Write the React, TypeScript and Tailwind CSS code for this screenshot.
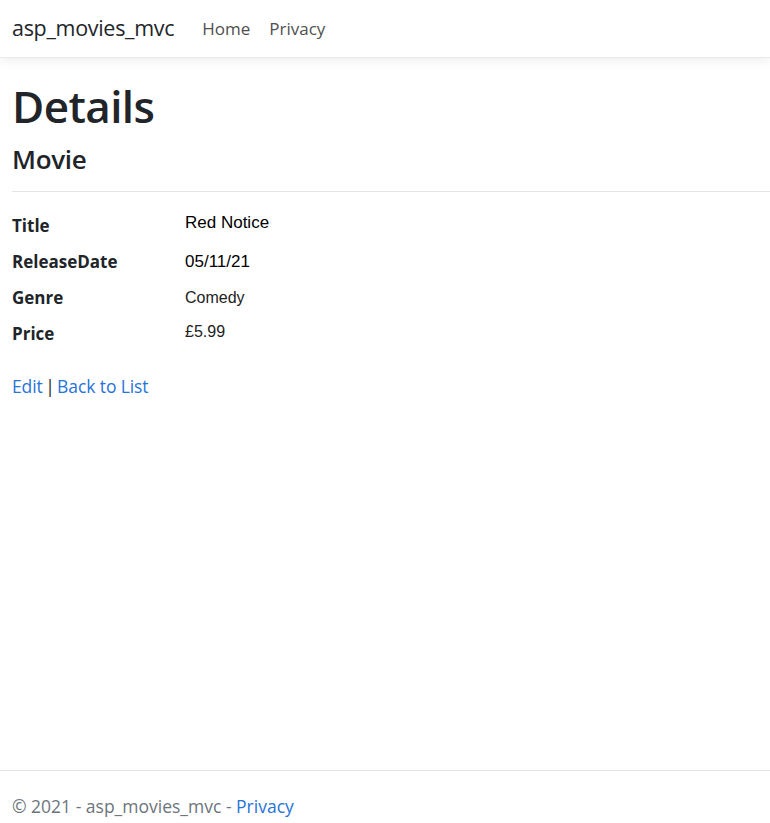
import React from "react";

export default function App() {
  return (
    <div className="min-h-[823px] flex flex-col bg-white text-[#212529] font-['Open_Sans',sans-serif]">
      <header className="h-[58px] flex items-center pl-3 border-b border-[#e9e9e9] shadow-[0_4px_10px_rgba(0,0,0,0.06)]">
        <span className="text-[21.5px] tracking-[-0.3px] text-[#212529]">asp_movies_mvc</span>
        <nav className="flex ml-[28px] gap-[19px] text-[17px] text-[#505050]">
          <span>Home</span>
          <span>Privacy</span>
        </nav>
      </header>
      <main className="flex-1 pl-3 pt-[20px]">
        <h1 className="text-[44px] font-semibold leading-[56px] tracking-[-0.6px]">Details</h1>
        <h4 className="text-[26px] font-semibold leading-[30px] mt-[10px] tracking-[-0.3px]">Movie</h4>
        <hr className="mt-[17px] border-[#e5e5e5]" />
        <dl className="grid grid-cols-[173px_1fr] mt-[16px] gap-y-0">
          <dt className="font-bold text-[17px] h-[36px] leading-[36px]">Title</dt>
          <dd className="text-[17px] h-[36px] leading-[36px] -mt-[3px] font-['Liberation_Sans',Arial,sans-serif] text-black">Red Notice</dd>
          <dt className="font-bold text-[17px] h-[36px] leading-[36px]">ReleaseDate</dt>
          <dd className="text-[17px] h-[36px] leading-[36px] font-['Liberation_Sans',Arial,sans-serif] text-black">05/11/21</dd>
          <dt className="font-bold text-[17px] h-[36px] leading-[36px]">Genre</dt>
          <dd className="text-[16px] h-[36px] leading-[36px] font-['Liberation_Sans',Arial,sans-serif] text-[#222]">Comedy</dd>
          <dt className="font-bold text-[17px] h-[36px] leading-[36px]">Price</dt>
          <dd className="text-[16px] h-[36px] leading-[36px] -mt-[2px] font-['Liberation_Sans',Arial,sans-serif] text-[#222]">£5.99</dd>
        </dl>
        <div className="mt-[21px] text-[17.5px] tracking-[-0.1px]">
          <a className="text-[#2873d8]">Edit</a> <span className="-ml-[2px]">|</span> <a className="text-[#2873d8] -ml-[2px]">Back to List</a>
        </div>
      </main>
      <footer className="border-t border-[#e5e5e5] h-[53px] flex items-end pb-[4px] pl-3 text-[17.5px] text-[#6c757d]">
        <span>
          © 2021 - asp_movies_mvc - <a className="text-[#2873d8]">Privacy</a>
        </span>
      </footer>
    </div>
  );
}
